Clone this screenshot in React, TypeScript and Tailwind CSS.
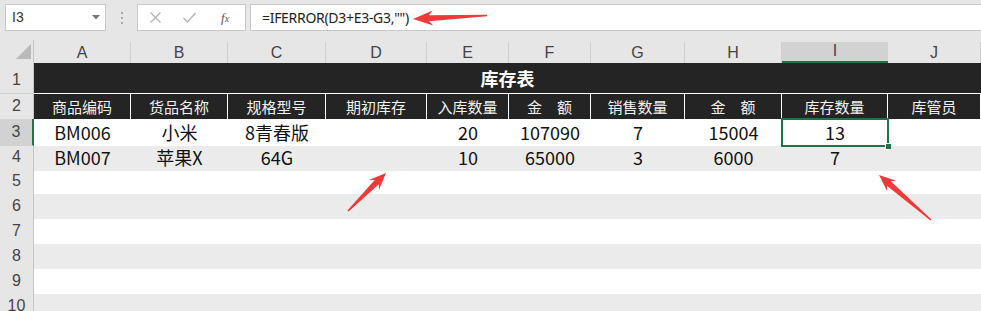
import React from "react";

const GRID =
  "grid grid-cols-[34px_97px_97px_98px_101px_82px_82px_94px_97px_106px_1fr]";
const CJK = "font-['Microsoft_YaHei','Noto_Sans_CJK_SC',sans-serif]";

const LETTERS = ["A", "B", "C", "D", "E", "F", "G", "H", "I", "J"];
const HEADERS = [
  "商品编码",
  "货品名称",
  "规格型号",
  "期初库存",
  "入库数量",
  "金　额",
  "销售数量",
  "金　额",
  "库存数量",
  "库管员",
];
const DATA = [
  ["BM006", "小米", "8青春版", "", "20", "107090", "7", "15004", "13", ""],
  ["BM007", "苹果X", "64G", "", "10", "65000", "3", "6000", "7", ""],
];

function arrow(
  tip: [number, number],
  tail: [number, number],
  head = 18,
  half = 7,
  neck = 3,
  end = 0.8
) {
  const dx = tip[0] - tail[0];
  const dy = tip[1] - tail[1];
  const len = Math.hypot(dx, dy);
  const ux = dx / len;
  const uy = dy / len;
  const nx = -uy;
  const ny = ux;
  const bx = tip[0] - ux * head;
  const by = tip[1] - uy * head;
  const nbx = tip[0] - ux * (head - 4);
  const nby = tip[1] - uy * (head - 4);
  const pts = [
    [tip[0], tip[1]],
    [bx + nx * half, by + ny * half],
    [nbx + nx * neck, nby + ny * neck],
    [tail[0] + nx * end, tail[1] + ny * end],
    [tail[0] - nx * end, tail[1] - ny * end],
    [nbx - nx * neck, nby - ny * neck],
    [bx - nx * half, by - ny * half],
  ];
  return pts.map((p) => p.map((v) => v.toFixed(1)).join(",")).join(" ");
}

function RowHead({ n, active }: { n: number; active?: boolean }) {
  return (
    <div
      className={`flex items-end justify-center pb-[1px] border-b border-[#d0d0d0] text-[16px] text-[#444] font-['Liberation_Sans',sans-serif] ${
        active
          ? "bg-[#d2d2d2] border-r-2 border-r-[#217346]"
          : "bg-[#e6e6e6] border-r border-r-[#c6c6c6]"
      }`}
    >
      {n}
    </div>
  );
}

export default function App() {
  return (
    <div className="relative w-[981px] h-[311px] overflow-hidden bg-white select-none">
      {/* Formula bar */}
      <div className="h-[40px] bg-[#e6e6e6] flex items-start pt-[4px] pl-[5px]">
        <div className="w-[101px] h-[27px] bg-white border border-[#c8c8c8] flex items-center justify-between pl-[6px] pr-[5px]">
          <span className="text-[14px] text-[#333] font-['Liberation_Sans',sans-serif]">
            I3
          </span>
          <svg width="8" height="5" viewBox="0 0 8 5">
            <polygon points="0,0 8,0 4,4.5" fill="#777" />
          </svg>
        </div>
        <div className="w-[31px] h-[27px] flex flex-col items-center justify-center gap-[3px]">
          <span className="w-[2px] h-[2px] bg-[#aaa]" />
          <span className="w-[2px] h-[2px] bg-[#aaa]" />
          <span className="w-[2px] h-[2px] bg-[#aaa]" />
        </div>
        <div className="w-[109px] h-[27px] bg-white border border-[#c8c8c8] flex items-center pl-[11px] gap-[20px]">
          <svg width="13" height="13" viewBox="0 0 13 13">
            <path d="M1.5 1.5 L11.5 11.5 M11.5 1.5 L1.5 11.5" stroke="#b3b3b3" strokeWidth="1.2" />
          </svg>
          <svg width="15" height="13" viewBox="0 0 15 13">
            <path d="M1.5 7 L5.5 11 L13.5 2" stroke="#b3b3b3" strokeWidth="1.4" fill="none" />
          </svg>
          <span className="ml-[4px] text-[13px] italic text-[#555] font-['Liberation_Serif',serif]">
            f<span className="text-[10px]">x</span>
          </span>
        </div>
        <div className="ml-[4px] flex-1 h-[27px] bg-white border border-[#c8c8c8] border-r-0 flex items-center pl-[11px]">
          <span className="text-[14px] text-[#222] font-['Microsoft_YaHei','Noto_Sans',sans-serif] tracking-[-0.3px]">
            =IFERROR(D3+E3-G3,"")
          </span>
        </div>
      </div>

      {/* Column letters */}
      <div className={`${GRID} h-[23px] bg-[#e6e6e6]`}>
        <div className="relative border-r border-[#c6c6c6]">
          <svg className="absolute left-[16px] top-[4px]" width="15" height="15" viewBox="0 0 15 15">
            <polygon points="15,0 15,15 0,15" fill="#b9b9b9" />
          </svg>
        </div>
        {LETTERS.map((l) => (
          <div
            key={l}
            className={`flex items-end justify-center text-[16px] text-[#444] font-['Liberation_Sans',sans-serif] ${
              l === "I"
                ? "bg-[#d2d2d2] border-b-2 border-[#217346] mt-[2px]"
                : "border-r border-[#cfcfcf] mt-[2px]"
            }`}
          >
            <span className="leading-none pb-[2px]">{l}</span>
          </div>
        ))}
      </div>

      {/* Row 1 title */}
      <div className={`${GRID} h-[31px]`}>
        <RowHead n={1} />
        <div
          className={`col-span-10 bg-[#242424] border-b border-white flex items-center justify-center text-[18px] font-bold text-white ${CJK}`}
        >
          库存表
        </div>
      </div>

      {/* Row 2 headers */}
      <div className={`${GRID} h-[25px]`}>
        <RowHead n={2} />
        {HEADERS.map((h, i) => (
          <div
            key={i}
            className={`bg-[#242424] border-r border-white flex items-center justify-center text-[15px] text-[#f2f2f2] whitespace-pre ${CJK}`}
          >
            {h}
          </div>
        ))}
      </div>

      {/* Data rows */}
      {DATA.map((row, r) => (
        <div key={r} className={`${GRID} h-[25px] ${r === 0 ? "relative z-10" : ""}`}>
          <RowHead n={r + 3} active={r === 0} />
          {row.map((v, c) => (
            <div
              key={c}
              className={`relative flex items-center justify-center text-[18px] text-[#111] ${CJK} ${
                r === 1 ? "bg-[#ebebeb]" : "bg-white"
              }`}
            >
              {v}
              {r === 0 && c === 8 && (
                <div className="absolute z-10 left-[-1px] top-[-1px] right-[-1px] bottom-[-1px] border-2 border-[#217346]">
                  <span className="absolute right-[-5px] bottom-[-5px] w-[7px] h-[7px] bg-[#217346] border border-white" />
                </div>
              )}
            </div>
          ))}
        </div>
      ))}

      {/* Empty rows */}
      {[5, 6, 7, 8, 9, 10].map((n) => (
        <div key={n} className={`${GRID} h-[25px]`}>
          <RowHead n={n} />
          <div className={`col-span-10 ${n % 2 === 0 ? "bg-[#ebebeb]" : "bg-white"}`} />
        </div>
      ))}

      {/* Annotation arrows */}
      <svg
        className="absolute left-0 top-0 z-20 pointer-events-none"
        width="981"
        height="311"
        viewBox="0 0 981 311"
      >
        <polygon points={arrow([413, 19], [487, 15.5], 20, 7.5, 3, 0.8)} fill="#f03a3a" />
        <polygon points={arrow([386, 173], [348, 211], 17, 7, 3, 0.8)} fill="#f03a3a" />
        <polygon points={arrow([879, 175], [931, 220], 17, 7, 3, 0.8)} fill="#f03a3a" />
      </svg>
    </div>
  );
}
